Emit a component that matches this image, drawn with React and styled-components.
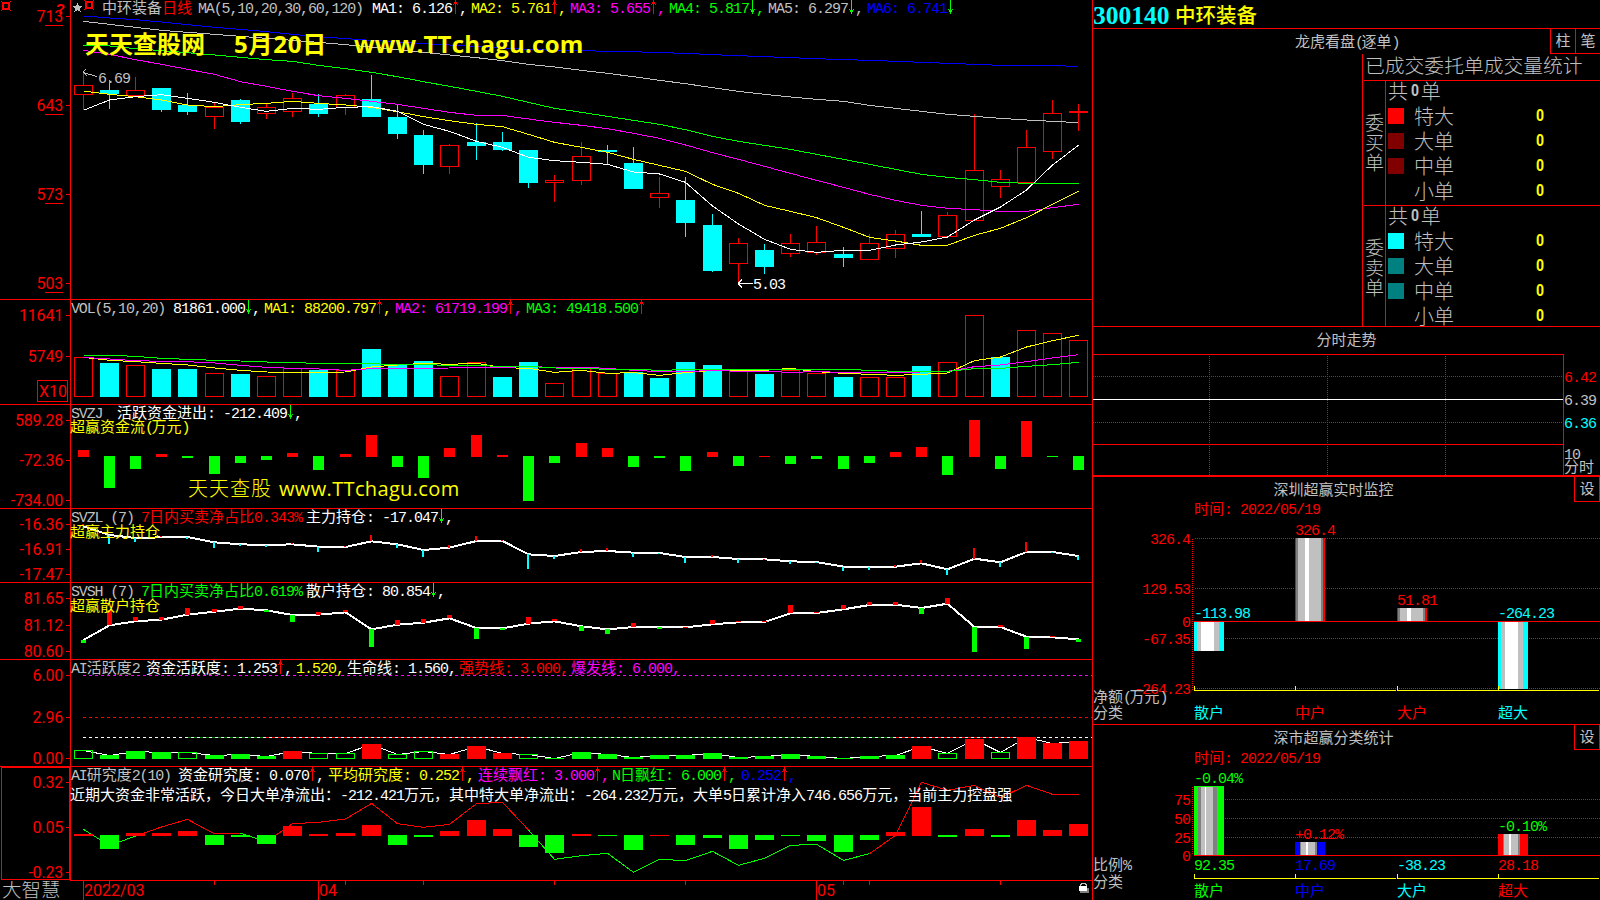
import React, { Fragment } from "react";
import styled, { createGlobalStyle } from "styled-components";

const GRAY = "#c0c0c0";
const RED = "#ff0000";
const CYAN = "#00ffff";
const YELLOW = "#ffff00";
const MAGENTA = "#ff00ff";
const GREEN = "#00ff00";
const BLUE = "#0000ff";
const WHITE = "#ffffff";

const MONO = '"Liberation Mono", "Noto Sans CJK SC", monospace';
const SANS = '"Noto Sans CJK SC", sans-serif';

const GlobalStyle = createGlobalStyle`
  * {
    box-sizing: border-box;
  }
  body {
    margin: 0;
    background: #000;
    overflow: hidden;
  }
`;

// layout

const Terminal = styled.div`
  display: flex;
  width: 1600px;
  height: 900px;
  background: #000;
  color: ${GRAY};
  font-family: ${MONO};
  font-size: 15px;
  font-weight: 400;
  overflow: hidden;
`;

const Charts = styled.div`
  display: flex;
  flex-direction: column;
  width: 1092px;
`;

const Side = styled.div`
  display: flex;
  flex-direction: column;
  width: 508px;
  border-left: 1px solid ${RED};
`;

const Panel = styled.div`
  position: relative;
  height: ${p => p.$h}px;
  border-bottom: ${p => (p.$open ? "none" : `1px solid ${RED}`)};
`;

const Drawing = styled.svg`
  display: block;
  shape-rendering: crispEdges;
`;

const Legend = styled.div`
  position: absolute;
  left: ${p => p.$left || 71}px;
  top: ${p => p.$top}px;
  display: flex;
  height: 16px;
  line-height: 16px;
  font-family: ${SANS};
  white-space: pre;
`;

const LegendItem = styled.span`
  display: flex;
  flex: none;
  width: ${p => (p.$w ? `${p.$w}px` : "auto")};
  color: ${p => p.$color};
`;

const Latin = styled.span`
  font-family: ${MONO};
  font-size: 15px;
  letter-spacing: ${p => p.$track}px;
`;

const Han = styled.span`
  font-family: ${SANS};
  font-size: 15px;
`;

const Watermark = styled.div`
  position: absolute;
  display: flex;
  left: ${p => p.$left}px;
  top: ${p => p.$top}px;
  height: 30px;
  line-height: 30px;
  color: ${YELLOW};
  white-space: pre;
  font-family: "Open Sans", "Noto Sans CJK SC", sans-serif;
  font-size: ${p => p.$size}px;
  font-weight: ${p => (p.$bold ? 700 : 400)};
`;

const WatermarkPart = styled.span`
  flex: none;
  width: ${p => p.$w}px;
  letter-spacing: ${p => p.$track || 0}px;
  font-weight: ${p => (p.$light ? 300 : "inherit")};
`;

const Quote = styled.div`
  display: flex;
  align-items: center;
  height: 29px;
  border-bottom: 1px solid ${RED};
`;

const Code = styled.span`
  width: 82px;
  padding-top: 3px;
  color: ${CYAN};
  font: bold 25.5px/28px "Liberation Serif", serif;
`;

const Name = styled.span`
  color: ${YELLOW};
  font: 500 20.5px/26px ${SANS};
`;

const Section = styled.div`
  height: ${p => p.$h}px;
  border-bottom: ${p => (p.$line ? `${p.$line}px solid ${RED}` : "none")};
`;

const TitleRow = styled.div`
  display: flex;
  height: ${p => p.$h}px;
  padding-left: ${p => p.$pad || 0}px;
`;

const Title = styled.div`
  flex: 1;
  text-align: center;
  line-height: 24px;
`;

const BoxButton = styled.div`
  width: ${p => p.$w}px;
  height: 25px;
  line-height: 22px;
  text-align: center;
  font-family: ${SANS};
  border: 1px solid ${RED};
  border-top: none;
  border-right-width: ${p => (p.$open ? 0 : 1)}px;
`;

const FlowBody = styled.div`
  display: flex;
  height: 272px;
`;

const FlowList = styled.div`
  width: 270px;
  border-right: 1px solid ${RED};
`;

const FlowStats = styled.div`
  flex: 1;
  margin-left: 1px;
  font-family: ${SANS};
  font-size: 20px;
  font-weight: 300;
`;

const FlowTitle = styled.div`
  height: 27px;
  padding-left: 1px;
  line-height: 22px;
  font-size: 19.8px;
  white-space: nowrap;
  border-bottom: 1px solid ${RED};
`;

const Group = styled.div`
  display: flex;
  height: ${p => p.$h}px;
  border-bottom: ${p => (p.$last ? "none" : `1px solid ${RED}`)};
`;

const SideName = styled.div`
  width: 22px;
  padding: 31px 0 0 1px;
  line-height: 20px;
  font-size: 19px;
  border-right: 1px solid ${RED};
`;

const Rows = styled.div`
  flex: 1;
  margin-top: -3px;
`;

const Row = styled.div`
  display: flex;
  align-items: center;
  height: 25px;
  line-height: 24px;
  padding-left: 2px;
`;

const Swatch = styled.span`
  width: 16px;
  height: 16px;
  margin-right: 10px;
  background: ${p => p.$color};
`;

const RowName = styled.span`
  width: 121px;
`;

const Count = styled.b`
  color: ${p => p.$color || YELLOW};
  font: bold 17px/25px Roboto, sans-serif;
  transform: scaleX(0.82);
`;

const TotalCount = styled(Count)`
  margin: 0 1px 0 2px;
`;

// text helpers: Han and Latin runs are spaced on different grids

const runs = text => text.match(/[\u2e80-\uffef]+|[^\u2e80-\uffef]+/g) || [];
const isHan = run => run.charCodeAt(0) > 0x2e7f;
const track = run => (/^[()]$/.test(run) ? -2.5 : -1);

const Mixed = ({ children, tight }) => (
  <Fragment>
    {runs(children).map((r, i) =>
      isHan(r) ? (
        <Han key={i}>{r}</Han>
      ) : (
        <Latin key={i} $track={tight ? -1.15 : track(r)}>{r}</Latin>
      )
    )}
  </Fragment>
);

const Label = ({ x, y, color = RED, anchor = "start", children }) => (
  <text x={x} y={y + 5} fill={color} textAnchor={anchor} fontSize="15">
    {runs(children).map((r, i) => (
      <tspan key={i} letterSpacing={isHan(r) ? 0 : track(r)}>
        {r}
      </tspan>
    ))}
  </text>
);

const Arrow = ({ up }) => (
  <Drawing width="7" height="16" viewBox="0 0 7 16">
    {up ? (
      <path d="M3 1h1v14h-1zM2 3h3v2h-3zM1 5h1v1h-1zM5 5h1v1h-1z" fill={RED} />
    ) : (
      <path d="M3 1h1v14h-1zM2 11h3v2h-3zM1 10h1v1h-1zM5 10h1v1h-1z" fill={GREEN} />
    )}
  </Drawing>
);

const Items = ({ top, left, items }) => (
  <Legend $top={top} $left={left}>
    {items.map(([text, color, w, arrow, tail = ","], i) => (
      <LegendItem key={i} $color={color} $w={w}>
        <span><Mixed tight={color === GRAY && !arrow}>{text}</Mixed></span>
        {arrow && <Arrow up={arrow === "up"} />}
        {arrow && <span><Mixed>{tail}</Mixed></span>}
      </LegendItem>
    ))}
  </Legend>
);

// data, one entry per trading day

const X0 = 83.12;
const STEP = 26.205;
const px = i => Math.floor(X0 + STEP * i);

// kind, high, body top, body bottom, low
const candles = [
  ["r", 72, 85, 95, 110], ["c", 80, 90, 94, 109], ["r", 77, 90, 96, 96], ["c", 88, 88, 110, 112],
  ["c", 93, 105, 112, 115], ["r", 102, 107, 117, 129], ["c", 99, 100, 122, 124], ["r", 104, 107, 114, 119],
  ["r", 93, 98, 112, 117], ["c", 94, 104, 114, 117], ["r", 94, 95, 108, 115], ["c", 75, 99, 117, 117],
  ["c", 104, 117, 134, 139], ["c", 130, 135, 165, 174], ["r", 144, 145, 167, 174], ["c", 123, 142, 146, 160],
  ["c", 132, 142, 150, 151], ["c", 150, 150, 183, 188], ["r", 175, 180, 183, 202], ["r", 142, 156, 181, 185],
  ["c", 145, 150, 152, 165], ["c", 147, 163, 189, 189], ["r", 177, 193, 198, 208], ["c", 177, 200, 223, 237],
  ["c", 214, 225, 271, 272], ["r", 238, 243, 264, 284], ["c", 244, 250, 267, 274], ["r", 234, 243, 254, 257],
  ["r", 226, 242, 253, 255], ["c", 247, 254, 258, 267], ["r", 234, 243, 260, 260], ["r", 230, 234, 249, 258],
  ["c", 211, 234, 237, 237], ["r", 212, 215, 237, 237], ["r", 114, 170, 221, 221], ["r", 170, 179, 187, 198],
  ["r", 130, 147, 183, 183], ["r", 100, 113, 152, 159], ["r", 104, 111, 113, 131]
];

// averages are kept in thirds of a pixel
const averages = [
  [BLUE, [48, 54, 59, 66, 74, 82, 88, 95, 103, 110, 116, 121, 126, 131, 135, 139, 144, 148, 151, 152, 154, 155, 158, 160, 164, 167, 170, 173, 176, 179, 181, 184, 187, 190, 193, 196, 196, 197, 199]],
  [GRAY, [64, 73, 82, 91, 97, 103, 109, 115, 121, 127, 134, 141, 149, 157, 165, 173, 182, 193, 201, 211, 220, 230, 241, 251, 263, 274, 283, 291, 298, 304, 316, 325, 334, 343, 349, 355, 360, 364, 368]],
  [GREEN, [136, 138, 146, 152, 158, 165, 172, 179, 184, 196, 206, 217, 230, 245, 259, 274, 289, 307, 325, 337, 349, 361, 373, 389, 409, 424, 436, 448, 463, 478, 493, 508, 523, 532, 539, 547, 550, 550, 550]],
  [MAGENTA, [151, 163, 179, 193, 208, 223, 245, 259, 274, 287, 295, 304, 313, 325, 337, 346, 346, 357, 367, 376, 386, 400, 415, 435, 458, 478, 499, 520, 541, 562, 583, 601, 616, 625, 629, 634, 634, 623, 613]],
  [YELLOW, [273, 283, 290, 300, 315, 320, 314, 310, 304, 310, 315, 322, 335, 350, 362, 373, 380, 403, 427, 442, 457, 478, 496, 514, 553, 580, 616, 634, 653, 682, 712, 723, 736, 736, 706, 685, 653, 613, 574]],
  [WHITE, [331, 300, 290, 284, 295, 307, 322, 334, 325, 328, 322, 320, 334, 373, 394, 424, 442, 472, 482, 487, 493, 516, 522, 547, 618, 672, 718, 748, 757, 751, 751, 735, 726, 711, 660, 621, 570, 495, 436]]
];

const volumes = "r357 c363 r365 c369 c369 r373 c374 r376 r368 c370 r370 c349 c365 c361 r376 r362 c377 c362 r383 r368 r373 c372 c378 c362 c365 r371 c374 r370 r373 c377 r377 r377 c366 r362 r315 c357 r330 r333 r340".split(" ");

const volumeAverages = [
  [YELLOW, [187, 196, 200, 205, 210, 219, 226, 231, 232, 232, 231, 216, 210, 205, 208, 205, 218, 220, 232, 226, 235, 233, 241, 233, 226, 226, 226, 220, 230, 235, 238, 241, 238, 234, 197, 186, 156, 137, 121]],
  [MAGENTA, [187, 192, 197, 199, 200, 204, 211, 217, 220, 222, 226, 221, 220, 220, 219, 217, 217, 215, 217, 217, 220, 226, 230, 230, 226, 229, 229, 232, 230, 232, 232, 232, 231, 229, 215, 210, 200, 189, 179]],
  [GREEN, [181, 181, 184, 190, 193, 196, 198, 201, 203, 205, 206, 206, 209, 209, 211, 212, 214, 214, 219, 220, 223, 223, 226, 224, 223, 223, 223, 223, 223, 223, 226, 229, 229, 229, 221, 220, 214, 209, 202]]
];

const flow = "r450 g488 g469 r454 g458 g474 g463 g460 r453 g470 r454 r435 g467 g478 r448 r435 r455 g501 g463 r443 r448 g467 g458 g471 r452 g466 r456 g464 g459 g469 g463 r452 r447 g475 r420 g469 r421 g457 g470".split(" ");

const mainLine = [694, 720, 729, 727, 726, 742, 748, 750, 748, 755, 756, 739, 748, 765, 758, 738, 738, 778, 783, 771, 768, 773, 774, 786, 786, 792, 793, 799, 801, 815, 816, 815, 805, 823, 791, 802, 771, 771, 783];
const mainBars = [688, 747, 741, 724, 731, 759, 753, 755, 743, 771, 752, 720, 759, 786, 750, 723, 736, 822, 792, 762, 759, 786, 777, 804, 780, 804, 791, 807, 804, 828, 825, 809, 795, 840, 759, 816, 741, 774, 795];

const retailLine = [180, 136, 124, 119, 104, 95, 86, 91, 105, 104, 97, 148, 134, 128, 115, 144, 145, 131, 124, 139, 148, 141, 142, 142, 133, 127, 126, 100, 99, 88, 75, 74, 84, 71, 141, 141, 170, 172, 178];
const retailBars = [189, 91, 111, 111, 84, 87, 78, 96, 126, 96, 90, 201, 120, 117, 105, 177, 150, 111, 117, 153, 162, 129, 147, 140, 120, 123, 123, 75, 96, 75, 66, 66, 102, 54, 216, 135, 207, 167, 186];

// r/g filled, h hollow
const activity = "h750 g755 g751 g752 h752 g755 g754 g756 r751 h753 h753 r744 h754 h751 r754 r746 r753 h754 g758 g752 g754 g757 g755 g755 g753 g757 g756 g754 g756 g758 g756 g755 r746 h753 r739 h752 r737 r743 r741".split(" ");

const research = "r834 g849 r833 r833 r831 g845 g837 g844 r826 r834 r833 r825 g845 g837 r831 r820 r829 g847 g853 r834 g836 g850 r835 g845 g838 g849 g840 g836 g841 g852 g840 r832 r807 g837 r829 g837 r820 r830 r824".split(" ");
const researchLine = [748, 797, 768, 741, 718, 762, 760, 785, 731, 727, 717, 670, 731, 742, 733, 671, 667, 750, 838, 827, 820, 877, 838, 842, 814, 856, 835, 796, 793, 841, 821, 766, 607, 631, 616, 653, 616, 643, 643];

const points = (values, base, from = 0) =>
  values.map((v, i) => `${px(from + i) + 0.5},${base + v / 3}`).join(" ");

// chart parts

const Series = ({ values, base = 0, color, width = 1, from = 0 }) => (
  <polyline points={points(values, base, from)} fill="none" stroke={color} strokeWidth={width} />
);

const Axis = ({ top, bottom, ticks, underline }) => (
  <g>
    <path d={`M70.5 ${top}V${bottom}`} stroke={RED} />
    {ticks.map(([text, y]) => (
      <g key={text}>
        <text
          x="63"
          y={y + 6}
          fill={RED}
          textAnchor="end"
          fontFamily="Roboto"
          fontWeight="400"
          fontSize="16"
          letterSpacing="-0.2"
        >
          {text}
        </text>
        <path d={`M66 ${y + 0.5}h4`} stroke={RED} />
        {underline && <path d={`M45 ${y + 9.5}h18`} stroke={RED} />}
      </g>
    ))}
  </g>
);

const HollowBar = ({ x, y, h, w = 19, color }) => (
  <rect x={x + 0.5} y={y + 0.5} width={w - 1} height={Math.max(h - 1, 1)} fill="none" stroke={color} />
);

const Candle = ({ i, data }) => {
  const [kind, high, top, bottom, low] = data;
  const c = px(i);
  if (kind === "c") {
    return (
      <g fill={CYAN}>
        <rect x={c} y={high} width="1" height={low - high} />
        <rect x={c - 9} y={top} width="19" height={bottom - top} />
      </g>
    );
  }
  return (
    <g>
      <rect x={c} y={high} width="1" height={top - high} fill={RED} />
      <rect x={c} y={bottom} width="1" height={low - bottom} fill={RED} />
      <HollowBar x={c - 9} y={top} h={bottom - top} color={RED} />
    </g>
  );
};

const ZeroBars = ({ items, zero, width }) =>
  items.map((item, i) => {
    const up = item[0] === "r";
    const v = +item.slice(1);
    return (
      <rect
        key={i}
        x={px(i) - (width - 1) / 2}
        y={up ? v : zero - 1}
        width={width}
        height={up ? zero - v : v - zero + 1}
        fill={up ? RED : GREEN}
      />
    );
  });

const Sticks = ({ line, ends, base, width, down }) =>
  line.map((v, i) => {
    const a = Math.round(base + v / 3);
    const b = Math.round(base + ends[i] / 3);
    return (
      <rect
        key={i}
        x={px(i) - Math.floor(width / 2)}
        y={Math.min(a, b)}
        width={width}
        height={Math.max(Math.abs(a - b), 1)}
        fill={ends[i] < v ? RED : down}
      />
    );
  });

const Plot = ({ top, h, children }) => (
  <Drawing width="1092" height={h} viewBox={`0 ${top} 1092 ${h}`} fontFamily={MONO}>
    {children}
  </Drawing>
);

const PinIcon = ({ x, y }) => (
  <g fill="none" stroke={RED}>
    <rect x={x + 1} y={y + 1} width="6" height="6" strokeWidth="2" />
    <path d={`M${x - 1} ${y - 0.5}h1m8 0h1M${x - 1} ${y + 8.5}h1m8 0h1`} />
  </g>
);

const PricePanel = () => (
  <Panel $h={300}>
    <Plot top={0} h={299}>
      <Axis top={0} bottom={299} ticks={[["713", 16], ["643", 105], ["573", 194], ["503", 283]]} underline />
      <PinIcon x={2} y={2} />
      <PinIcon x={85} y={1} />
      <text x="56" y="14" fill={RED} fontFamily="Liberation Sans" fontWeight="700" fontSize="15">?</text>
      <path d="M77.5 2.5l1.4 3.5h3.6l-2.8 2.4 1.1 3.8-3.3-2.2-3.3 2.2 1.1-3.8-2.8-2.4h3.6z" fill={GRAY} />
      {candles.map((d, i) => <Candle key={i} i={i} data={d} />)}
      {averages.map(([color, values]) => <Series key={color} values={values} color={color} />)}
      <path d="M83 72.5l14 4M83 72l3-3M83 72l4 4" fill="none" stroke={GRAY} />
      <Label x={98} y={78} color={GRAY}>6.69</Label>
      <path d="M738 283.5h15M738 283.5l4-4M738 283.5l4 4" fill="none" stroke={WHITE} />
      <Label x={753} y={284} color={WHITE}>5.03</Label>
    </Plot>
    <Items
      top={-1}
      left={102}
      items={[
        ["中环装备", GRAY, 60],
        ["日线", RED, 36],
        ["MA(5,10,20,30,60,120)", GRAY, 174],
        ["MA1: 6.126", WHITE, 99, "up"],
        ["MA2: 5.761", YELLOW, 99, "up"],
        ["MA3: 5.655", MAGENTA, 99, "up"],
        ["MA4: 5.817", GREEN, 99, "down"],
        ["MA5: 6.297", GRAY, 99, "down"],
        ["MA6: 6.741", BLUE, 99, "down", ""]
      ]}
    />
    <Watermark $left={85} $top={29} $size={24} $bold>
      <WatermarkPart $w={149}>天天查股网</WatermarkPart>
      <WatermarkPart $w={120} $track={0.8}>5月20日</WatermarkPart>
      <WatermarkPart $w={240} $track={0.25}>www.TTchagu.com</WatermarkPart>
    </Watermark>
  </Panel>
);

const VolumePanel = () => (
  <Panel $h={105}>
    <Plot top={300} h={104}>
      <Axis top={300} bottom={404} ticks={[["11641", 315], ["5749", 356]]} />
      <rect x="37.5" y="380.5" width="30" height="21" fill="none" stroke={RED} />
      <text x="39" y="397" fill={RED} fontFamily="Roboto" fontWeight="400" fontSize="16">X10</text>
      {volumes.map((v, i) => {
        const y = +v.slice(1);
        return v[0] === "c" ? (
          <rect key={i} x={px(i) - 9} y={y} width="19" height={397 - y} fill={CYAN} />
        ) : (
          <HollowBar key={i} x={px(i) - 9} y={y} h={397 - y} color={RED} />
        );
      })}
      {volumeAverages.map(([color, values]) => (
        <Series key={color} values={values} base={295} color={color} />
      ))}
    </Plot>
    <Items
      top={-1}
      items={[
        ["VOL(5,10,20)", GRAY, 102],
        ["81861.000", WHITE, 91, "down"],
        ["MA1: 88200.797", YELLOW, 131, "up"],
        ["MA2: 61719.199", MAGENTA, 131, "up"],
        ["MA3: 49418.500", GREEN, 131, "up", ""]
      ]}
    />
  </Panel>
);

const FlowPanel = () => (
  <Panel $h={104}>
    <Plot top={405} h={103}>
      <Axis top={405} bottom={508} ticks={[["589.28", 420], ["-72.36", 460], ["-734.00", 500]]} />
      <ZeroBars items={flow} zero={457} width={11} />
    </Plot>
    <Items top={-1} items={[["SVZJ", GRAY, 46], ["活跃资金进出: -212.409", WHITE, null, "down"]]} />
    <Items top={13} left={70} items={[["超赢资金流(万元)", YELLOW]]} />
    <Watermark $left={188} $top={69} $size={20}>
      <WatermarkPart $w={91} $track={1} $light>天天查股</WatermarkPart>
      <WatermarkPart $w={200} $track={0.35}>www.TTchagu.com</WatermarkPart>
    </Watermark>
  </Panel>
);

const MainHoldPanel = () => (
  <Panel $h={74}>
    <Plot top={509} h={73}>
      <Axis top={509} bottom={582} ticks={[["-16.36", 524], ["-16.91", 549], ["-17.47", 574]]} />
      <Series values={mainLine} base={295} color={WHITE} width={2} />
      <Sticks line={mainLine} ends={mainBars} base={295} width={2} down={CYAN} />
    </Plot>
    <Items
      top={-1}
      items={[
        ["SVZL (7)", GRAY, 70],
        ["7日内买卖净占比0.343%", RED, 165],
        ["主力持仓: -17.047", WHITE, null, "down"]
      ]}
    />
    <Items top={14} left={70} items={[["超赢主力持仓", YELLOW]]} />
  </Panel>
);

const RetailHoldPanel = () => (
  <Panel $h={77}>
    <Plot top={583} h={76}>
      <Axis top={583} bottom={659} ticks={[["81.65", 598], ["81.12", 625], ["80.60", 651]]} />
      <Series values={retailLine} base={580} color={WHITE} width={2} />
      <Sticks line={retailLine} ends={retailBars} base={580} width={5} down={GREEN} />
    </Plot>
    <Items
      top={-1}
      items={[
        ["SVSH (7)", GRAY, 70],
        ["7日内买卖净占比0.619%", GREEN, 165],
        ["散户持仓: 80.854", WHITE, null, "down"]
      ]}
    />
    <Items top={14} left={70} items={[["超赢散户持仓", YELLOW]]} />
  </Panel>
);

const ActivityPanel = () => (
  <Panel $h={107}>
    <Plot top={660} h={106}>
      <Axis top={660} bottom={766} ticks={[["6.00", 675], ["2.96", 717], ["0.00", 758]]} />
      <g strokeDasharray="3 3">
        <path d="M83 675.5H1092" stroke={MAGENTA} />
        <path d="M83 717.5H1092" stroke={RED} />
      </g>
      <path d="M188 737.5H263M528 737.5H893" stroke="#008000" />
      <path d="M263 737.5H528M893 737.5H1017" stroke={RED} />
      <path d="M83 737.5H1092" stroke={WHITE} strokeDasharray="3 3" />
      <polyline
        points={activity.map((v, i) => `${px(i) + 0.5},${+v.slice(1) + 0.5}`).join(" ")}
        fill="none"
        stroke={WHITE}
      />
      {activity.map((v, i) => {
        const y = +v.slice(1);
        return v[0] === "h" ? (
          <HollowBar key={i} x={px(i) - 9} y={y} h={759 - y} color={GREEN} />
        ) : (
          <rect key={i} x={px(i) - 9} y={y} width="19" height={759 - y} fill={v[0] === "r" ? RED : GREEN} />
        );
      })}
    </Plot>
    <Items
      top={-1}
      items={[
        ["AI活跃度2", GRAY, 75],
        ["资金活跃度: 1.253", WHITE, 150, "up"],
        ["1.520,", YELLOW, 51],
        ["生命线: 1.560,", WHITE, 112],
        ["强势线: 3.000,", RED, 112],
        ["爆发线: 6.000,", MAGENTA]
      ]}
    />
  </Panel>
);

const ResearchPanel = () => (
  <Panel $h={114} $open>
    <Plot top={767} h={114}>
      <Axis top={767} bottom={881} ticks={[["0.32", 782], ["0.05", 827], ["-0.23", 872]]} />
      <rect x="1.5" y="767.5" width="68" height="112" fill="none" stroke={RED} />
      <path d="M70 880.5H1092" stroke={RED} />
      <Series values={researchLine.slice(0, 3)} base={580} color={GREEN} />
      <Series values={researchLine.slice(2, 7)} from={2} base={580} color={RED} />
      <Series values={researchLine.slice(6, 8)} from={6} base={580} color={GREEN} />
      <Series values={researchLine.slice(7, 18)} from={7} base={580} color={RED} />
      <Series values={researchLine.slice(17, 31)} from={17} base={580} color={GREEN} />
      <Series values={researchLine.slice(30)} from={30} base={580} color={RED} />
      <ZeroBars items={research} zero={836} width={19} />
    </Plot>
    <Items
      top={-1}
      items={[
        ["AI研究度2(10)", GRAY, 107],
        ["资金研究度: 0.070", WHITE, 150, "up"],
        ["平均研究度: 0.252", YELLOW, 150, "up"],
        ["连续飘红: 3.000", MAGENTA, 134, "up"],
        ["N日飘红: 6.000", GREEN, 129, "up"],
        ["0.252", BLUE, null, "up"]
      ]}
    />
    <Items
      top={19}
      left={70}
      items={[["近期大资金非常活跃，今日大单净流出：-212.421万元，其中特大单净流出：-264.232万元，大单5日累计净入746.656万元，当前主力控盘强", WHITE]]}
    />
  </Panel>
);

const months = [[0, "2022/03"], [9, "04"], [28, "05"]];
const weeks = [1, 5, 10, 13, 18, 23, 29, 30, 35];

const TimeAxis = () => (
  <Panel $h={19} $open>
    <Plot top={881} h={19}>
      <text x="2" y="897" fill={GRAY} fontSize="19.5" fontWeight="300" fontFamily="Noto Sans CJK SC">大智慧</text>
      {months.map(([i, text]) => (
        <g key={text}>
          <path d={`M${px(i) + 0.5} 881v19`} stroke={RED} />
          <text x={px(i) + 1} y="896" fill={RED} fontFamily="Roboto" fontWeight="400" fontSize="16">{text}</text>
        </g>
      ))}
      {weeks.map(i => <path key={i} d={`M${px(i) + 0.5} 881v4`} stroke={RED} />)}
      <path d="M1080.5 887v-3h1v-1h4v1h1v3" fill="none" stroke={GRAY} />
      <rect x="1080" y="888" width="9" height="5" fill="#808080" />
      <rect x="1079" y="886" width="8" height="5" fill={WHITE} />
    </Plot>
  </Panel>
);

// right column

const SideDrawing = ({ top, h, children }) => (
  <Drawing width="507" height={h} viewBox={`1093 ${top} 507 ${h}`} fontFamily={MONO}>
    {children}
  </Drawing>
);

const groups = [
  { side: "委买单", h: 125, rows: [["特大", RED], ["大单", "#800000"], ["中单", "#800000"], ["小单", "transparent"]] },
  { side: "委卖单", h: 120, rows: [["特大", CYAN], ["大单", "#008080"], ["中单", "#008080"], ["小单", "transparent"]] }
];

const OrderFlow = () => (
  <Section $h={298} $line={1}>
    <TitleRow $h={25} $pad={50}>
      <Title><Mixed>龙虎看盘(逐单)</Mixed></Title>
      <BoxButton $w={25} $open>柱</BoxButton>
      <BoxButton $w={25} $open>笔</BoxButton>
    </TitleRow>
    <FlowBody>
      <FlowList />
      <FlowStats>
        <FlowTitle>已成交委托单成交量统计</FlowTitle>
        {groups.map((g, n) => (
          <Group key={g.side} $h={g.h} $last={n === 1}>
            <SideName>
              {g.side.split("").map(c => <div key={c}>{c}</div>)}
            </SideName>
            <Rows>
              <Row>共<TotalCount $color={GRAY}>0</TotalCount>单</Row>
              {g.rows.map(([name, color]) => (
                <Row key={name}>
                  <Swatch $color={color} />
                  <RowName>{name}</RowName>
                  <Count>0</Count>
                </Row>
              ))}
            </Rows>
          </Group>
        ))}
      </FlowStats>
    </FlowBody>
  </Section>
);

const Intraday = () => (
  <Section $h={150} $line={2}>
    <TitleRow $h={27}>
      <Title><Mixed>分时走势</Mixed></Title>
    </TitleRow>
    <SideDrawing top={354} h={121}>
      <path d="M1093 354.5H1563.5V475M1093 444.5H1563" fill="none" stroke={RED} />
      <g stroke={RED} strokeDasharray="1 1">
        <path d="M1093 376.5H1563M1093 422.5H1563" />
        <path d="M1209.5 356V475M1327.5 356V475M1445.5 356V475" />
      </g>
      <path d="M1093 399.5H1563" stroke={WHITE} />
      <Label x={1564} y={377}>6.42</Label>
      <Label x={1564} y={400} color={GRAY}>6.39</Label>
      <Label x={1564} y={423} color={CYAN}>6.36</Label>
      <Label x={1564} y={454} color={GRAY}>10</Label>
      <Label x={1564} y={467} color={GRAY}>分时</Label>
    </SideDrawing>
  </Section>
);

// a bar is a row of vertical stripes: [colour, width]
const Stripes = ({ x, y, h, parts }) => {
  let at = x;
  return parts.map(([color, w], i) => {
    const rect = <rect key={i} x={at} y={y} width={w} height={h} fill={color} />;
    at += w;
    return rect;
  });
};

const D = "#808080";
const riseBar = [[RED, 1], [D, 2], [GRAY, 7], [WHITE, 4], [GRAY, 12], [D, 2], [RED, 2]];
const fallBar = [[CYAN, 3], [GRAY, 4], [WHITE, 13], [GRAY, 5], [CYAN, 5]];
const shareBar = color => [[color, 5], [D, 1], [GRAY, 5], [WHITE, 2], [GRAY, 7], [D, 2], [color, 8]];
const wideBar = [[GREEN, 4], [D, 3], [GRAY, 4], [WHITE, 1], [GRAY, 7], [D, 4], [GREEN, 7]];

const cols = [1194, 1295, 1397, 1498];

const CategoryAxis = ({ y, labelY, colors }) => (
  <g>
    <path d={`M1194 ${y + 0.5}H1396M1397 ${y + 0.5}H1599`} stroke={YELLOW} />
    {cols.map((x, i) => (
      <g key={x}>
        <path d={`M${x + 0.5} ${y - 4}v4`} stroke={YELLOW} />
        <Label x={x} y={labelY} color={colors[i]}>{["散户", "中户", "大户", "超大"][i]}</Label>
      </g>
    ))}
  </g>
);

const Monitor = () => (
  <Section $h={248} $line={1}>
    <TitleRow $h={25}>
      <Title><Mixed>深圳超赢实时监控</Mixed></Title>
      <BoxButton $w={26}>设</BoxButton>
    </TitleRow>
    <SideDrawing top={502} h={222}>
      <Label x={1194} y={509}>时间: 2022/05/19</Label>
      {[["326.4", 539], ["129.53", 589], ["0", 622], ["-67.35", 639], ["-264.23", 689]].map(([t, y]) => (
        <Label key={t} x={1190} y={y} anchor="end">{t}</Label>
      ))}
      <g stroke={RED} strokeDasharray="1 1">
        <path d="M1192.5 539V690M1195 538.5H1600M1195 588.5H1600M1195 638.5H1600M1195 688.5H1600" />
      </g>
      <Stripes x={1194} y={622} h={29} parts={fallBar} />
      <Stripes x={1295} y={538} h={83} parts={riseBar} />
      <Stripes x={1397} y={608} h={13} parts={riseBar} />
      <Stripes x={1498} y={622} h={67} parts={fallBar} />
      <path d="M1194 621.5H1600" stroke={RED} />
      <Label x={1194} y={613} color={CYAN}>-113.98</Label>
      <Label x={1295} y={530}>326.4</Label>
      <Label x={1397} y={600}>51.81</Label>
      <Label x={1498} y={613} color={CYAN}>-264.23</Label>
      <Label x={1093} y={697} color={GRAY}>净额(万元)</Label>
      <Label x={1093} y={713} color={GRAY}>分类</Label>
      <CategoryAxis y={690} labelY={713} colors={[CYAN, RED, RED, CYAN]} />
    </SideDrawing>
  </Section>
);

const Share = () => (
  <Section $h={175}>
    <TitleRow $h={25}>
      <Title><Mixed>深市超赢分类统计</Mixed></Title>
      <BoxButton $w={26}>设</BoxButton>
    </TitleRow>
    <SideDrawing top={750} h={150}>
      <Label x={1194} y={758}>时间: 2022/05/19</Label>
      {[["75", 800], ["50", 819], ["25", 838], ["0", 856]].map(([t, y]) => (
        <Label key={t} x={1190} y={y} anchor="end">{t}</Label>
      ))}
      <g stroke={RED} strokeDasharray="1 1">
        <path d="M1192.5 787V855M1195 799.5H1600M1195 818.5H1600M1195 837.5H1600" />
      </g>
      <Stripes x={1194} y={786} h={69} parts={wideBar} />
      <rect x="1194" y="786" width="30" height="1" fill={GREEN} />
      <Stripes x={1295} y={842} h={13} parts={shareBar(BLUE)} />
      <Stripes x={1498} y={834} h={21} parts={shareBar(RED)} />
      <path d="M1194 855.5H1600" stroke={RED} />
      <Label x={1194} y={778} color={GREEN}>-0.04%</Label>
      <Label x={1295} y={834}>+0.12%</Label>
      <Label x={1498} y={826} color={GREEN}>-0.10%</Label>
      <Label x={1194} y={865} color={GREEN}>92.35</Label>
      <Label x={1295} y={865} color={BLUE}>17.69</Label>
      <Label x={1397} y={865} color={CYAN}>-38.23</Label>
      <Label x={1498} y={865}>28.18</Label>
      <Label x={1093} y={865} color={GRAY}>比例%</Label>
      <Label x={1093} y={882} color={GRAY}>分类</Label>
      <CategoryAxis y={878} labelY={891} colors={[GREEN, BLUE, CYAN, RED]} />
    </SideDrawing>
  </Section>
);

const App = () => (
  <Fragment>
    <GlobalStyle />
    <Terminal>
      <Charts>
        <PricePanel />
        <VolumePanel />
        <FlowPanel />
        <MainHoldPanel />
        <RetailHoldPanel />
        <ActivityPanel />
        <ResearchPanel />
        <TimeAxis />
      </Charts>
      <Side>
        <Quote>
          <Code>300140</Code>
          <Name>中环装备</Name>
        </Quote>
        <OrderFlow />
        <Intraday />
        <Monitor />
        <Share />
      </Side>
    </Terminal>
  </Fragment>
);

export default App;
